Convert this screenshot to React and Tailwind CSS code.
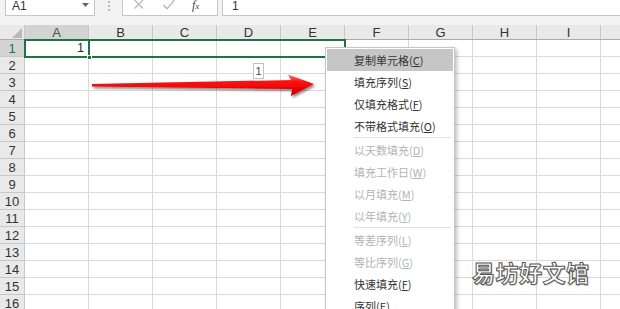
import React from "react";

const COLS = ["A", "B", "C", "D", "E", "F", "G", "H", "I", "J"];
const ROWS = Array.from({ length: 16 }, (_, i) => i + 1);

const MENU = [
  { label: "复制单元格", key: "C", active: true },
  { label: "填充序列", key: "S" },
  { label: "仅填充格式", key: "F" },
  { label: "不带格式填充", key: "O" },
  { sep: true },
  { label: "以天数填充", key: "D", disabled: true },
  { label: "填充工作日", key: "W", disabled: true },
  { label: "以月填充", key: "M", disabled: true },
  { label: "以年填充", key: "Y", disabled: true },
  { sep: true },
  { label: "等差序列", key: "L", disabled: true },
  { label: "等比序列", key: "G", disabled: true },
  { label: "快速填充", key: "F" },
  { label: "序列", key: "E" },
];

function FormulaBar() {
  return (
    <div className="flex h-[16px] bg-[#f3f3f3] font-['Liberation_Sans',sans-serif]">
      {/* Name box */}
      <div className="ml-[5px] flex w-[90px] shrink-0 items-start justify-between border-x border-b border-[#c6c6c6] bg-white pl-[6px] pr-[5px] text-[12px] leading-[12px] text-[#333]">
        <span>A1</span>
        <svg width="7" height="4" viewBox="0 0 7 4" className="mt-[3px]">
          <path d="M0 0 L7 0 L3.5 4 Z" fill="#666" />
        </svg>
      </div>
      <div className="flex w-[27px] shrink-0 justify-center">
        <svg width="2" height="12" viewBox="0 0 2 12">
          <rect x="0" y="1" width="2" height="2" fill="#bbb" />
          <rect x="0" y="5" width="2" height="2" fill="#bbb" />
          <rect x="0" y="9" width="2" height="2" fill="#bbb" />
        </svg>
      </div>
      {/* Cancel / enter / fx */}
      <div className="flex w-[96px] shrink-0 items-start border-x border-b border-[#c6c6c6] bg-white">
        <svg width="10" height="9" viewBox="0 0 10 9" className="ml-[11px]">
          <path d="M0.5 0 L9 8.5 M9 0 L0.5 8.5" stroke="#b5b5b5" strokeWidth="1.1" />
        </svg>
        <svg width="12" height="10" viewBox="0 0 12 10" className="ml-[19px]">
          <path d="M0.5 5 L4 8.8 L11.5 0" stroke="#b5b5b5" strokeWidth="1.3" fill="none" />
        </svg>
        <span className="ml-[17px] font-['Liberation_Serif',serif] text-[12px] leading-[11px] italic text-[#444]">
          f<span className="text-[9px]">x</span>
        </span>
      </div>
      <div className="ml-[4px] flex-1 border-b border-l border-[#c6c6c6] bg-white pl-[9px] text-[12px] leading-[12px] text-[#333]">
        1
      </div>
    </div>
  );
}

function Sheet() {
  return (
    <div className="font-['Liberation_Sans',sans-serif] text-[13px]">
      {/* Column headers */}
      <div className="flex h-[15px] border-b border-[#ababab] bg-[#e9e9e9]">
        <div className="relative w-[25px] shrink-0 border-r border-[#c8c8c8]">
          <svg width="10" height="10" viewBox="0 0 10 10" className="absolute right-[2px] bottom-[1px]">
            <path d="M10 0 L10 10 L0 10 Z" fill="#b8b8b8" />
          </svg>
        </div>
        {COLS.map((c, i) => (
          <div
            key={c}
            className={`flex w-[64px] shrink-0 items-center justify-center border-r border-[#c8c8c8] leading-none ${
              i === 0 ? "bg-[#d3d3d3] text-[#2f5f44]" : "text-[#333]"
            }`}
          >
            {c}
          </div>
        ))}
      </div>
      {/* Rows */}
      {ROWS.map((r) => (
        <div key={r} className="flex h-[17px]">
          <div
            className={`flex w-[25px] shrink-0 items-center justify-center border-r border-b leading-none ${
              r === 1
                ? "border-r-[#217346] border-b-[#c8c8c8] bg-[#d3d3d3] text-[#217346]"
                : "border-[#c8c8c8] bg-[#e9e9e9] text-[#333]"
            }`}
          >
            {r}
          </div>
          {COLS.map((c) => (
            <div
              key={c}
              className="flex w-[64px] shrink-0 items-center justify-end border-r border-b border-[#dadada] pr-[4px] text-[12px] leading-none text-[#222]"
            >
              {r === 1 && c === "A" ? "1" : ""}
            </div>
          ))}
        </div>
      ))}
    </div>
  );
}

function AutoFillMenu() {
  return (
    <div className="absolute left-[325px] top-[47px] w-[130px] border border-[#c6c6c6] bg-white p-[1px] font-['Noto_Sans_CJK_SC','Liberation_Sans',sans-serif] text-[11px] shadow-[2px_2px_4px_rgba(0,0,0,0.25)]">
      {MENU.map((m, i) =>
        m.sep ? (
          <div key={i} className="ml-[27px] mr-[2px] h-[2px] border-t border-[#e1e1e1]" />
        ) : (
          <div
            key={i}
            className={`flex h-[22px] items-center pl-[27px] leading-none ${
              m.active ? "bg-[#c6c6c6]" : ""
            } ${m.disabled ? "text-[#b3b3b3]" : "text-[#333]"}`}
          >
            {m.label}(<span className="underline underline-offset-1">{m.key}</span>)
          </div>
        )
      )}
    </div>
  );
}

function RedArrow() {
  return (
    <svg width="620" height="309" viewBox="0 0 620 309" className="pointer-events-none absolute left-0 top-0">
      <defs>
        <linearGradient id="arrowFill" x1="0" y1="0" x2="0" y2="1">
          <stop offset="0" stopColor="#ff7a7a" />
          <stop offset="0.35" stopColor="#ff0a0a" />
          <stop offset="1" stopColor="#c80000" />
        </linearGradient>
        <filter id="arrowShadow" x="-10%" y="-50%" width="120%" height="200%">
          <feDropShadow dx="1.5" dy="2" stdDeviation="1.3" floodColor="#000" floodOpacity="0.45" />
        </filter>
      </defs>
      <path
        d="M92 84 L291 80 L288 74.5 L314 84 L291 96 L292 89 L92 86.5 Z"
        fill="url(#arrowFill)"
        filter="url(#arrowShadow)"
      />
    </svg>
  );
}

export default function App() {
  return (
    <div className="relative h-[309px] w-[620px] overflow-hidden bg-white">
      <FormulaBar />
      <div className="h-[9px] bg-[#f3f3f3]" />
      <Sheet />

      {/* Selection range A1:E1 */}
      <div className="pointer-events-none absolute left-[24px] top-[39px] h-[19px] w-[322px] border-2 border-[#217346]" />
      <div className="pointer-events-none absolute left-[88px] top-[39px] h-[19px] w-[2px] bg-[#217346]" />
      <div className="pointer-events-none absolute left-[87px] top-[55px] h-[5px] w-[5px] border border-white bg-[#217346]" />

      {/* Drag tooltip */}
      <div className="absolute left-[253px] top-[63px] flex h-[16px] w-[11px] items-center justify-center border border-[#c2c2c2] bg-white font-['Liberation_Sans',sans-serif] text-[11px] text-[#3a4a66]">
        1
      </div>

      <RedArrow />
      <AutoFillMenu />

      {/* Watermark */}
      <div className="absolute left-[472px] top-[261px] font-['Noto_Sans_CJK_SC',sans-serif] text-[23px] font-bold leading-none tracking-[0.5px] text-white [-webkit-text-stroke:1px_#555] [text-shadow:1px_1px_1px_rgba(0,0,0,0.25)]">
        易坊好文馆
      </div>
    </div>
  );
}
